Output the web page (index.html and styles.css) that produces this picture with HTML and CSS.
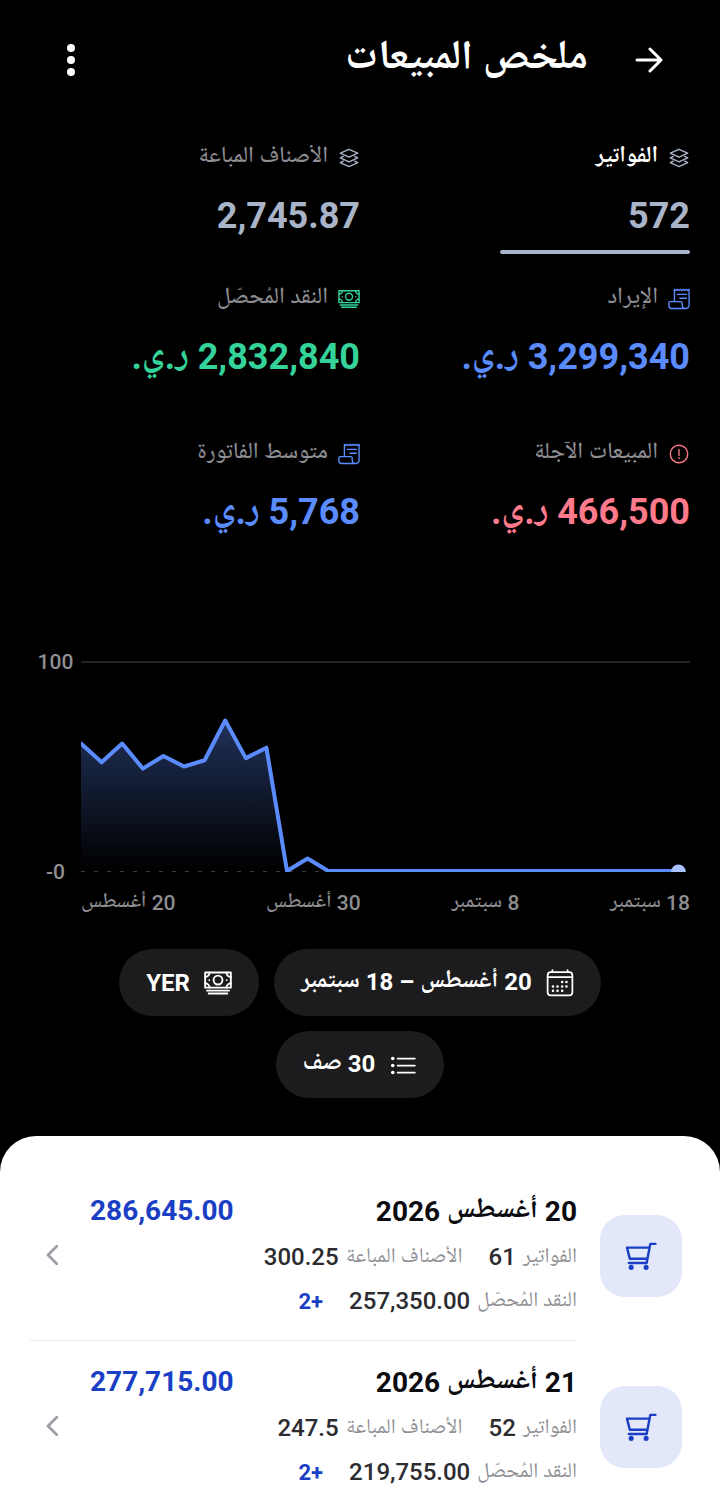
FILE: index.html
```html
<!doctype html>
<html lang="ar" dir="rtl">
<head>
    <meta charset="utf-8">
    <meta name="viewport" content="width=device-width, initial-scale=1">
    <title>ملخص المبيعات</title>
    <link rel="stylesheet" href="styles.css">
</head>
<body>
    <!-- Shared icons -->
    <svg class="sprite" aria-hidden="true">
        <symbol id="icon-layers" viewBox="0 0 24 24">
            <path d="M12 2.5l9.500 4.300-9.500 4.300-9.500-4.300z"/>
            <path d="M5.800 10.200L2.500 11.900l9.500 4.300 9.500-4.300-3.300-1.700"/>
            <path d="M5.800 15.300L2.500 17l9.500 4.300 9.500-4.300-3.300-1.700"/>
        </symbol>
        <symbol id="icon-receipt" viewBox="0 0 24 24">
            <path d="M7 14.500V1.500l1.600 1.300 1.600-1.300 1.600 1.300 1.600-1.300L15 2.800l1.600-1.300 1.600 1.300 1.600-1.300 1.600 1.300L23 1.500V19a3.300 3.300 0 0 1-3.300 3.300H4a3 3 0 0 1-3-3v-3.300a1.200 1.200 0 0 1 1.200-1.200H14a1.500 1.500 0 0 1 1.500 1.500v2.500a3.500 3.500 0 0 0 4 3.500"/>
            <path d="M10 7h10M13 11.200h7"/>
        </symbol>
        <symbol id="icon-cash" viewBox="0 0 24 24">
            <path d="M1 3h22v13H1z"/>
            <circle cx="12" cy="9.500" r="3.800"/>
            <path d="M1 6.800A4 4 0 0 0 4.800 3M19.200 3A4 4 0 0 0 23 6.800M1 12.200A4 4 0 0 1 4.800 16M19.200 16A4 4 0 0 1 23 12.200M4.500 9.500h0M19.500 9.500h0"/>
            <path d="M2.500 18.500h19M4 21h16"/>
        </symbol>
        <symbol id="icon-alert" viewBox="0 0 24 24">
            <circle cx="12" cy="12" r="9.500"/>
            <path d="M12 7v6.500M12 16v1"/>
        </symbol>
        <symbol id="icon-cart" viewBox="0 0 34 30">
            <path d="M32.500 2H27l-4 20.500H4M2 6h24M2 6l3 12h18.500"/>
            <circle class="dot" cx="6.500" cy="27.200" r="2.700"/>
            <circle class="dot" cx="22.500" cy="27.200" r="2.700"/>
        </symbol>
    </svg>

    <div class="app">
        <header class="topbar">
            <button type="button" class="icon-button" aria-label="رجوع">
                <svg class="arrow" viewBox="0 0 28 28"><path d="M2 14h24M15 3l11 11-11 11"/></svg>
            </button>
            <h1>ملخص المبيعات</h1>
            <button type="button" class="icon-button" aria-label="المزيد">
                <svg class="dots" viewBox="0 0 8 36"><circle cx="4" cy="6" r="4"/><circle cx="4" cy="18" r="4"/><circle cx="4" cy="30" r="4"/></svg>
            </button>
        </header>

        <section class="metrics">
            <button type="button" class="metric slate active">
                <span class="metric-label"><svg><use href="#icon-layers"/></svg>الفواتير</span>
                <span class="metric-value">572</span>
            </button>
            <button type="button" class="metric slate">
                <span class="metric-label"><svg><use href="#icon-layers"/></svg>الأصناف المباعة</span>
                <span class="metric-value">2,745.87</span>
            </button>
            <button type="button" class="metric blue">
                <span class="metric-label"><svg><use href="#icon-receipt"/></svg>الإيراد</span>
                <span class="metric-value">3,299,340 ر.ي.</span>
            </button>
            <button type="button" class="metric green">
                <span class="metric-label"><svg><use href="#icon-cash"/></svg>النقد المُحصّل</span>
                <span class="metric-value">2,832,840 ر.ي.</span>
            </button>
            <button type="button" class="metric red">
                <span class="metric-label"><svg><use href="#icon-alert"/></svg>المبيعات الآجلة</span>
                <span class="metric-value">466,500 ر.ي.</span>
            </button>
            <button type="button" class="metric blue">
                <span class="metric-label"><svg><use href="#icon-receipt"/></svg>متوسط الفاتورة</span>
                <span class="metric-value">5,768 ر.ي.</span>
            </button>
        </section>

        <section class="chart">
            <div class="y-axis"><span>100</span><span>-0</span></div>
            <div class="plot">
                <svg viewBox="0 0 609 211">
                    <defs>
                        <linearGradient id="fade" x1="0" y1="0" x2="0" y2="1">
                            <stop offset="0" stop-color="#5b8cff" stop-opacity="0.350"/>
                            <stop offset="1" stop-color="#5b8cff" stop-opacity="0"/>
                        </linearGradient>
                    </defs>
                    <line class="grid" x1="0" y1="1" x2="609" y2="1"/>
                    <line class="grid dashed" x1="0" y1="210.500" x2="609" y2="210.500"/>
                    <path id="area" class="area" fill="url(#fade)"/>
                    <path id="line" class="series"/>
                    <circle id="last" class="last" r="7.500"/>
                </svg>
                <div class="x-axis">
                    <span dir="rtl">20 أغسطس</span>
                    <span dir="rtl">30 أغسطس</span>
                    <span dir="rtl">8 سبتمبر</span>
                    <span dir="rtl">18 سبتمبر</span>
                </div>
            </div>
        </section>

        <div class="filters">
            <button type="button" class="chip">
                <svg viewBox="0 0 26 26"><rect x="1.500" y="3" width="23" height="21.500" rx="3"/><path d="M1.500 7.500h23M6 1V3M20 1V3"/><path class="points" d="M15 12h0M19 12h0M6.500 16.300h0M10.700 16.300h0M15 16.300h0M19 16.300h0M6.500 20.300h0M10.700 20.300h0M15 20.300h0"/></svg>
                <span class="chip-text">20 أغسطس – 18 سبتمبر</span>
            </button>
            <button type="button" class="chip">
                <svg viewBox="0 0 24 24"><use href="#icon-cash"/></svg>
                YER
            </button>
            <button type="button" class="chip">
                <svg viewBox="0 0 26 26"><path d="M8 7h16M8 13.500h16M8 20h16"/><path class="bullets" d="M3.500 7h0M3.500 13.500h0M3.500 20h0"/></svg>
                <span class="chip-text">30 صف</span>
            </button>
        </div>

        <main class="sheet">
            <a class="day" href="#day-20">
                <span class="tile"><svg><use href="#icon-cart"/></svg></span>
                <span class="day-body">
                    <span class="details">
                        <strong class="date">20 أغسطس 2026</strong>
                        <span class="facts">
                            <span class="fact">الفواتير <b>61</b></span>
                            <span class="fact">الأصناف المباعة <b>300.25</b></span>
                            <span class="fact">النقد المُحصّل <b>257,350.00</b></span>
                            <span class="more">+2</span>
                        </span>
                    </span>
                    <strong class="amount">286,645.00</strong>
                    <svg class="chevron" viewBox="0 0 12 20"><path d="M11 1l-9 9 9 9"/></svg>
                </span>
            </a>
            <a class="day" href="#day-21">
                <span class="tile"><svg><use href="#icon-cart"/></svg></span>
                <span class="day-body">
                    <span class="details">
                        <strong class="date">21 أغسطس 2026</strong>
                        <span class="facts">
                            <span class="fact">الفواتير <b>52</b></span>
                            <span class="fact">الأصناف المباعة <b>247.5</b></span>
                            <span class="fact">النقد المُحصّل <b>219,755.00</b></span>
                            <span class="more">+2</span>
                        </span>
                    </span>
                    <strong class="amount">277,715.00</strong>
                    <svg class="chevron" viewBox="0 0 12 20"><path d="M11 1l-9 9 9 9"/></svg>
                </span>
            </a>
        </main>
    </div>

    <script src="chart.js"></script>
</body>
</html>
```
FILE: styles.css
```css
* {
    box-sizing: border-box;
}
body {
    margin: 0;
    background-color: #000;
    color: #fff;
    font-family: Roboto, 'Noto Naskh Arabic UI', 'Noto Naskh Arabic', 'Noto Sans Arabic', 'DejaVu Sans', sans-serif;
}
button {
    border: none;
    padding: 0;
    background: none;
    color: inherit;
    font: inherit;
    text-align: start;
    cursor: pointer;
}
svg {
    display: block;
    flex: none;
    fill: none;
    stroke: currentColor;
    stroke-width: 1.5;
    stroke-linecap: round;
    stroke-linejoin: round;
}
.sprite {
    position: absolute;
    width: 0;
    height: 0;
}
.app {
    display: flex;
    flex-direction: column;
    height: 100vh;
    overflow: hidden;
}

/* Header */
.topbar {
    display: flex;
    align-items: center;
    height: 120px;
    padding: 0 41px;
}
.topbar h1 {
    flex: 1;
    margin: 0 31px 0 0;
    font-size: 41px;
    line-height: 62px;
    font-weight: 700;
}
.icon-button {
    display: flex;
    justify-content: center;
    align-items: center;
    width: 60px;
    height: 60px;
}
.arrow {
    width: 28px;
    height: 28px;
    stroke-width: 3;
}
.dots {
    width: 8px;
    height: 36px;
    fill: #fff;
    stroke: none;
}

/* Metrics */
.metrics {
    display: grid;
    grid-template-columns: 1fr 1fr;
    padding: 14px 30px 0;
}
.metric {
    display: flex;
    flex-direction: column;
    gap: 17px;
    height: 155px;
}
.slate {
    height: 141px;
    color: #a9b4c8;
}
.blue {
    color: #5b8cff;
}
.green {
    color: #34d399;
}
.red {
    color: #ff7a8a;
}
.metric-label {
    display: flex;
    align-items: center;
    gap: 10px;
    height: 48px;
    font-size: 23px;
    line-height: 48px;
    font-weight: 500;
    color: #8e8e93;
}
.metric-label svg {
    width: 22px;
    height: 22px;
}
.slate svg {
    color: #a9b4c8;
}
.blue svg {
    color: #5b8cff;
}
.green svg {
    color: #34d399;
}
.red svg {
    color: #ff7a8a;
}
.metric-value {
    font-size: 36px;
    line-height: 34px;
    font-weight: 700;
}
.active .metric-label {
    color: #fff;
    font-weight: 700;
}
.active::after {
    content: "";
    width: 190px;
    height: 4px;
    border-radius: 2px;
    background-color: #a9b4c8;
}

/* Chart */
.chart {
    display: flex;
    direction: ltr;
    padding: 76px 30px 0;
    color: #8e8e93;
    font-size: 21px;
    line-height: 28px;
    font-weight: 500;
}
.y-axis {
    display: flex;
    flex-direction: column;
    justify-content: space-between;
    align-items: center;
    width: 51px;
    margin: -13px 0 31px;
}
.plot {
    flex: 1;
}
.plot svg {
    width: 100%;
}
.grid {
    stroke: #242426;
    stroke-width: 2;
}
.dashed {
    stroke: #3a3a3c;
    stroke-width: 1;
    stroke-linecap: butt;
    stroke-dasharray: 4 9;
}
.area {
    stroke: none;
}
.series {
    stroke: #5b8cff;
    stroke-width: 4;
}
.last {
    fill: #a9c1ff;
    stroke: none;
}
.x-axis {
    display: flex;
    justify-content: space-between;
    margin-top: 17px;
}

/* Filters */
.filters {
    display: flex;
    flex-wrap: wrap;
    justify-content: center;
    gap: 15px;
    padding: 32px 60px 38px;
}
.chip {
    display: flex;
    align-items: center;
    gap: 14px;
    height: 67px;
    padding: 0 27px;
    border-radius: 34px;
    background-color: #1c1c1e;
    font-size: 24px;
    font-weight: 700;
}
.chip-text {
    padding-bottom: 5px;
}
.chip svg {
    width: 28px;
    height: 28px;
    stroke-width: 1.6;
}
.chip .points {
    stroke-width: 2.4;
}
.chip .bullets {
    stroke-width: 3.4;
}

/* Daily list */
.sheet {
    flex: 1;
    min-height: 0;
    overflow-y: auto;
    scrollbar-width: none;
    padding: 34px 38px 0 30px;
    border-radius: 36px 36px 0 0;
    background-color: #fff;
}
.day {
    display: flex;
    align-items: center;
    gap: 23px;
    color: #0b0b0f;
    text-decoration: none;
}
.tile {
    display: flex;
    justify-content: center;
    align-items: center;
    width: 82px;
    height: 82px;
    border-radius: 25px;
    background-color: #e2e7fa;
    color: #1a3fc4;
}
.tile svg {
    width: 32px;
    height: 28px;
    stroke-width: 2.6;
}
.dot {
    fill: currentColor;
    stroke: none;
}
.day-body {
    display: flex;
    flex: 1;
    align-items: center;
    height: 171px;
    padding-left: 16px;
    border-bottom: 1px solid #ececf0;
}
.details {
    flex: 1;
    padding-top: 5px;
}
.date,
.amount {
    display: block;
    font-size: 28px;
    line-height: 44px;
}
.amount {
    align-self: flex-start;
    width: 144px;
    margin-top: 19px;
    color: #1a3fc4;
    text-align: left;
}
.facts {
    display: flex;
    flex-wrap: wrap;
    column-gap: 26px;
}
.fact {
    display: flex;
    align-items: baseline;
    gap: 7px;
    height: 44px;
    color: #8e8e93;
    font-size: 21px;
    line-height: 46px;
    white-space: nowrap;
}
.fact b {
    color: #2c2c30;
    font-size: 24px;
    font-weight: 500;
}
.more {
    color: #1a3fc4;
    font-size: 22px;
    line-height: 48px;
    font-weight: 700;
}
.chevron {
    width: 12px;
    height: 20px;
    margin-right: 32px;
    color: #9e9ea6;
    stroke-width: 2.8;
}
```
FILE: chart.js
```js
// Invoices per day, 20 August to 18 September
const invoices = [61, 52, 61, 49, 55, 50, 53, 72, 54, 59, 0, 6].concat(Array(18).fill(0));
const step = 20.6;
const base = 210;

const points = invoices.map((n, i) => [i * step, base - n * 2.09]);
const path = 'M' + points.map(p => p.join(' ')).join('L');
const last = points[points.length - 1];

document.getElementById('line').setAttribute('d', path);
document.getElementById('area').setAttribute('d', path + 'V' + base + 'H0Z');
document.getElementById('last').setAttribute('cx', last[0]);
document.getElementById('last').setAttribute('cy', last[1] + 1);
```
